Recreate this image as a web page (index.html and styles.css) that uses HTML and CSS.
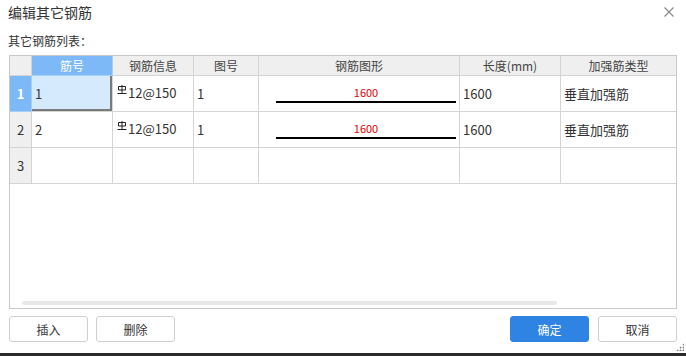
FILE: index.html
```html
<!DOCTYPE html>
<html lang="zh-CN">
<head>
    <meta charset="UTF-8">
    <title>编辑其它钢筋</title>
    <link rel="stylesheet" href="styles.css">
</head>
<body>
    <div class="dialog">
        <div class="title-bar">
            <span class="title">编辑其它钢筋</span>
            <svg class="close" width="10" height="10" viewBox="0 0 10 10">
                <path d="M0.5 0.5 L9.5 9.5 M9.5 0.5 L0.5 9.5" stroke="#8a8a8a" stroke-width="1.2" fill="none"/>
            </svg>
        </div>
        <div class="label">其它钢筋列表：</div>

        <div class="grid-box">
            <table class="grid">
                <colgroup>
                    <col style="width:22px">
                    <col style="width:81px">
                    <col style="width:81px">
                    <col style="width:65px">
                    <col style="width:201px">
                    <col style="width:101px">
                    <col>
                </colgroup>
                <thead>
                    <tr>
                        <th class="corner"></th>
                        <th class="active">筋号</th>
                        <th>钢筋信息</th>
                        <th>图号</th>
                        <th>钢筋图形</th>
                        <th>长度(mm)</th>
                        <th>加强筋类型</th>
                    </tr>
                </thead>
                <tbody>
                    <tr>
                        <td class="row-head active">1</td>
                        <td class="selected">1</td>
                        <td class="info"><svg class="grade" width="10" height="10" viewBox="0 0 10 10"><path d="M1.5 1.5 H8.5 V5 H1.5 Z M5 0 V8.5 M0.5 8.5 H9.5" stroke="#222" stroke-width="1" fill="none"/></svg>12@150</td>
                        <td>1</td>
                        <td class="shape"><div class="shape-box"><span class="dim">1600</span><span class="bar"></span></div></td>
                        <td>1600</td>
                        <td>垂直加强筋</td>
                    </tr>
                    <tr>
                        <td class="row-head">2</td>
                        <td>2</td>
                        <td class="info"><svg class="grade" width="10" height="10" viewBox="0 0 10 10"><path d="M1.5 1.5 H8.5 V5 H1.5 Z M5 0 V8.5 M0.5 8.5 H9.5" stroke="#222" stroke-width="1" fill="none"/></svg>12@150</td>
                        <td>1</td>
                        <td class="shape"><div class="shape-box"><span class="dim">1600</span><span class="bar"></span></div></td>
                        <td>1600</td>
                        <td>垂直加强筋</td>
                    </tr>
                    <tr>
                        <td class="row-head">3</td>
                        <td></td>
                        <td></td>
                        <td></td>
                        <td></td>
                        <td></td>
                        <td></td>
                    </tr>
                </tbody>
            </table>
            <div class="scroll-track"></div>
        </div>

        <div class="actions">
            <div class="group">
                <button class="btn">插入</button>
                <button class="btn">删除</button>
            </div>
            <div class="group">
                <button class="btn primary">确定</button>
                <button class="btn">取消</button>
            </div>
        </div>
        <div class="grip"></div>
    </div>
    <div class="taskbar"></div>
</body>
</html>
```

FILE: styles.css
```css
* {
    margin: 0;
    padding: 0;
    box-sizing: border-box;
    font-family: "Noto Sans CJK SC", "Noto Sans", sans-serif;
}

body {
    width: 686px;
    height: 356px;
    background: #fff;
    color: #333;
    overflow: hidden;
}

.dialog {
    height: 353px;
    padding: 0 9px;
    display: flex;
    flex-direction: column;
    position: relative;
}

.title-bar {
    height: 24px;
    display: flex;
    justify-content: space-between;
    align-items: center;
}

.title {
    font-size: 14px;
    margin-left: -1px;
    color: #333;
}

.close {
    margin-right: 3px;
}

.label {
    margin-top: 10px;
    margin-left: -1px;
    font-size: 12px;
    line-height: 14px;
    color: #333;
}

.grid-box {
    margin-top: 7px;
    height: 254px;
    border: 1px solid #c8c8c8;
    display: flex;
    flex-direction: column;
}

.grid {
    width: 100%;
    table-layout: fixed;
    border-collapse: separate;
    border-spacing: 0;
}

.grid th,
.grid td {
    border-right: 1px solid #d4d4d4;
    border-bottom: 1px solid #d4d4d4;
    white-space: nowrap;
    overflow: hidden;
}

.grid th:last-child,
.grid td:last-child {
    border-right: none;
}

.grid th {
    height: 20px;
    background: #efefef;
    font-size: 12px;
    font-weight: normal;
    color: #444;
    text-align: center;
    line-height: 18px;
}

.grid th.active {
    background: #7db9f6;
    color: #fff;
    border-right-color: #a8cff7;
    border-bottom-color: #a8cff7;
}

.grid td {
    height: 36px;
    font-size: 13px;
    color: #333;
    padding-left: 3px;
    vertical-align: middle;
}

.grid td.row-head {
    background: #efefef;
    text-align: center;
    padding-left: 0;
    font-size: 13px;
}

.grid td.row-head.active {
    background: #7db9f6;
    color: #fff;
    font-weight: bold;
    border-right-color: #a8cff7;
    border-bottom-color: #a8cff7;
}

.grid td.selected {
    background: #d6eafd;
    box-shadow: inset -2px -2px 0 #7a7a7a;
}

.grid td.info {
    padding-left: 4px;
    padding-bottom: 2px;
}

.grade {
    vertical-align: 3px;
    margin-right: 1px;
}

.grid td.shape {
    padding: 2px 2px 0 17px;
}

.shape-box {
    width: 180px;
    display: flex;
    flex-direction: column;
    align-items: center;
}

.dim {
    font-size: 11px;
    line-height: 13px;
    color: #e00000;
}

.bar {
    width: 100%;
    height: 2px;
    margin-top: 2px;
    background: #000;
}

.scroll-track {
    margin: auto 0 3px 12px;
    width: 535px;
    height: 4px;
    border-radius: 2px;
    background: #e8e8e8;
}

.actions {
    margin-top: 7px;
    display: flex;
    justify-content: space-between;
}

.group {
    display: flex;
    gap: 8px;
}

.group + .group {
    gap: 9px;
}

.btn {
    width: 79px;
    height: 26px;
    border: 1px solid #cfcfcf;
    border-radius: 3px;
    background: #fff;
    font-size: 12px;
    color: #333;
}

.btn.primary {
    background: #2f83e2;
    border-color: #2f83e2;
    color: #fff;
}

.grip {
    position: absolute;
    right: 2px;
    bottom: 2px;
    width: 8px;
    height: 8px;
    background:
        radial-gradient(circle, #888 0.9px, transparent 1.1px) 0 0 / 3px 3px;
    clip-path: polygon(100% 0, 100% 100%, 0 100%);
}

.taskbar {
    height: 3px;
    background: #2a2a2a;
}
```
